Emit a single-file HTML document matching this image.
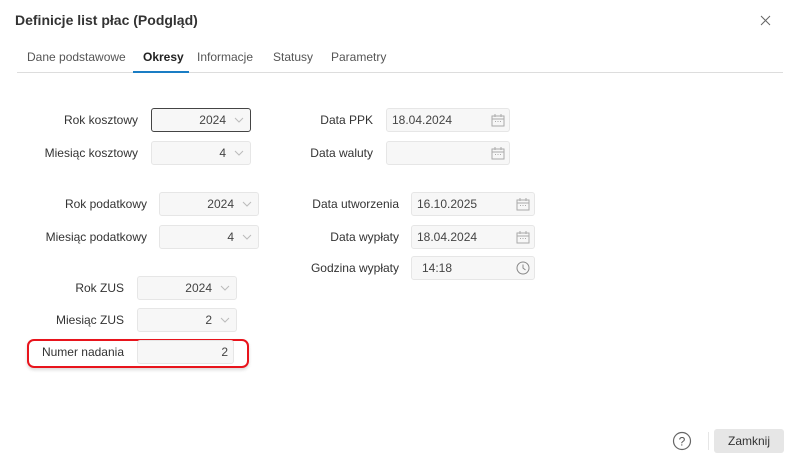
<!DOCTYPE html>
<html><head><meta charset="utf-8"><style>
*{box-sizing:border-box;margin:0;padding:0}
body{width:800px;height:462px;background:#fff;font-family:"Liberation Sans",Arial,sans-serif;color:#333;position:relative;overflow:hidden;font-size:12px}
.a{position:absolute}
.lbl{position:absolute;text-align:right;font-size:12px;color:#333;line-height:24px}
.box{position:absolute;height:24px;background:#f7f7f7;border:1px solid #e6e6e6;border-radius:3px;font-size:12px;line-height:22px;color:#444}
.sel{text-align:right;padding-right:24px}
.chev{position:absolute;right:6px;top:8px}
.dt{padding-left:5px}
.ic{position:absolute;right:4px;top:5px}
.tab{position:absolute;top:50px;font-size:12px;color:#555}
</style></head><body>
<div class="a" style="left:15px;top:12px;font-size:14px;font-weight:bold;color:#333">Definicje list płac (Podgląd)</div>
<svg class="a" style="left:760px;top:15px" width="11" height="11"><path d="M1 1L10 10M10 1L1 10" stroke="#666" stroke-width="1"/></svg>
<div class="tab" style="left:27px">Dane podstawowe</div>
<div class="tab" style="left:143px;color:#222;font-weight:bold">Okresy</div>
<div class="tab" style="left:197px">Informacje</div>
<div class="tab" style="left:273px">Statusy</div>
<div class="tab" style="left:331px">Parametry</div>
<div class="a" style="left:17px;top:72px;width:766px;height:1px;background:#ddd"></div>
<div class="a" style="left:133px;top:71px;width:56px;height:2px;background:#1a7dc4"></div>

<svg width="0" height="0" style="position:absolute"><defs>
<symbol id="cv" viewBox="0 0 10 6"><path d="M1 1L5 5L9 1" fill="none" stroke="#bbb" stroke-width="1"/></symbol>
<symbol id="cal" viewBox="0 0 14 13"><rect x="1" y="2" width="12" height="10" fill="none" stroke="#aaa"/><path d="M1 5H13M4 0V3M10 0V3" stroke="#aaa"/><path d="M4 7.5h1M6.5 7.5h1M9 7.5h1" stroke="#aaa"/></symbol>
</defs></svg>

<div class="lbl" style="left:0;width:138px;top:108px">Rok kosztowy</div>
<div class="box sel" style="left:151px;top:108px;width:100px;border-color:#444">2024<svg class="chev" width="10" height="6"><use href="#cv"/></svg></div>
<div class="lbl" style="left:0;width:138px;top:141px">Miesiąc kosztowy</div>
<div class="box sel" style="left:151px;top:141px;width:100px">4<svg class="chev" width="10" height="6"><use href="#cv"/></svg></div>

<div class="lbl" style="left:0;width:147px;top:192px">Rok podatkowy</div>
<div class="box sel" style="left:159px;top:192px;width:100px">2024<svg class="chev" width="10" height="6"><use href="#cv"/></svg></div>
<div class="lbl" style="left:0;width:147px;top:225px">Miesiąc podatkowy</div>
<div class="box sel" style="left:159px;top:225px;width:100px">4<svg class="chev" width="10" height="6"><use href="#cv"/></svg></div>

<div class="lbl" style="left:0;width:124px;top:276px">Rok ZUS</div>
<div class="box sel" style="left:137px;top:276px;width:100px">2024<svg class="chev" width="10" height="6"><use href="#cv"/></svg></div>
<div class="lbl" style="left:0;width:124px;top:308px">Miesiąc ZUS</div>
<div class="box sel" style="left:137px;top:308px;width:100px">2<svg class="chev" width="10" height="6"><use href="#cv"/></svg></div>
<div class="a" style="left:27px;top:339px;width:222px;height:29px;border:2px solid #e8141c;border-radius:7px;box-shadow:0 2px 3px rgba(0,0,0,.15)"></div>
<div class="lbl" style="left:0;width:124px;top:340px">Numer nadania</div>
<div class="box" style="left:137px;top:340px;width:97px;text-align:right;padding-right:5px">2</div>

<div class="lbl" style="left:250px;width:123px;top:108px">Data PPK</div>
<div class="box dt" style="left:386px;top:108px;width:124px">18.04.2024<svg class="ic" width="14" height="13"><use href="#cal"/></svg></div>
<div class="lbl" style="left:250px;width:123px;top:141px">Data waluty</div>
<div class="box dt" style="left:386px;top:141px;width:124px"><svg class="ic" width="14" height="13"><use href="#cal"/></svg></div>

<div class="lbl" style="left:250px;width:149px;top:192px">Data utworzenia</div>
<div class="box dt" style="left:411px;top:192px;width:124px">16.10.2025<svg class="ic" width="14" height="13"><use href="#cal"/></svg></div>
<div class="lbl" style="left:250px;width:149px;top:225px">Data wypłaty</div>
<div class="box dt" style="left:411px;top:225px;width:124px">18.04.2024<svg class="ic" width="14" height="13"><use href="#cal"/></svg></div>
<div class="lbl" style="left:250px;width:149px;top:256px">Godzina wypłaty</div>
<div class="box" style="left:411px;top:256px;width:124px;padding-left:10px">14:18<svg class="ic" width="14" height="14" style="top:4px"><circle cx="7" cy="7" r="6" fill="none" stroke="#888"/><path d="M7 3.5V7L9.5 9" fill="none" stroke="#888"/></svg></div>

<svg class="a" style="left:672px;top:431px" width="20" height="20"><circle cx="10" cy="10" r="8.5" fill="none" stroke="#666" stroke-width="1.2"/><text x="10" y="14.5" text-anchor="middle" font-family="Liberation Sans" font-size="12" fill="#555">?</text></svg>
<div class="a" style="left:708px;top:432px;width:1px;height:18px;background:#e6e6e6"></div>
<div class="a" style="left:714px;top:429px;width:70px;height:24px;background:#e6e6e6;border-radius:3px;text-align:center;line-height:24px;font-size:12px;color:#333">Zamknij</div>
</body></html>
